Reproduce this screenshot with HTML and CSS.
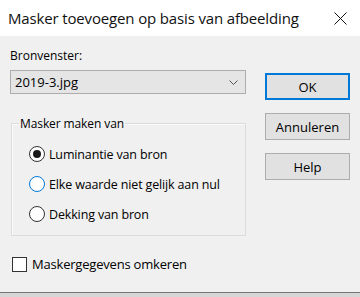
FILE: index.html
```html
<!DOCTYPE html>
<html lang="nl">
<head>
  <meta charset="UTF-8">
  <title>Masker toevoegen op basis van afbeelding</title>
  <link rel="stylesheet" href="styles.css">
</head>
<body>
  <div class="dialog">
    <div class="titlebar">
      <span class="title">Masker toevoegen op basis van afbeelding</span>
      <svg class="close" width="13" height="13" viewBox="0 0 13 13" aria-label="Sluiten">
        <path d="M0.5 0.5 L12.5 12.5 M12.5 0.5 L0.5 12.5" stroke="#111" stroke-width="1" fill="none"/>
      </svg>
    </div>

    <div class="body">
      <div class="main">
        <div class="left">
          <div class="label">Bronvenster:</div>
          <div class="select">
            <span>2019-3.jpg</span>
            <svg width="9" height="5" viewBox="0 0 9 5">
              <path d="M0.5 0.5 L4.5 4.5 L8.5 0.5" stroke="#555" fill="none"/>
            </svg>
          </div>

          <fieldset class="group">
            <legend>Masker maken van</legend>
            <div class="option">
              <span class="radio checked"></span>
              <span>Luminantie van bron</span>
            </div>
            <div class="option">
              <span class="radio focus"></span>
              <span>Elke waarde niet gelijk aan nul</span>
            </div>
            <div class="option">
              <span class="radio"></span>
              <span>Dekking van bron</span>
            </div>
          </fieldset>
        </div>

        <div class="buttons">
          <button class="btn default">OK</button>
          <button class="btn">Annuleren</button>
          <button class="btn">Help</button>
        </div>
      </div>

      <div class="check-row">
        <span class="checkbox"></span>
        <span>Maskergegevens omkeren</span>
      </div>
    </div>
  </div>
</body>
</html>
```

FILE: styles.css
```css
body {
  margin: 0;
  background: #d6d6d6;
  font-family: "Open Sans", "Noto Sans", sans-serif;
  color: #000;
}

.dialog {
  height: 292px;
  background: #f0f0f0;
  border-bottom: 1px solid #777;
}

.titlebar {
  height: 36px;
  background: #fff;
  display: flex;
  align-items: center;
  justify-content: space-between;
  padding: 0 13px 0 8px;
}

.title {
  font-size: 15px;
  letter-spacing: -0.15px;
  color: #111;
}

.body {
  padding: 12px 10px 0 10px;
}

.main {
  display: flex;
}

.left {
  width: 236px;
}

.label {
  font-size: 12px;
  line-height: 16px;
  height: 22px;
}

.select {
  height: 22px;
  border: 1px solid #adadad;
  background: #e5e5e5;
  display: flex;
  align-items: center;
  justify-content: space-between;
  padding: 0 7px 0 4px;
  font-size: 13px;
}

.group {
  margin: 21px 0 0 1px;
  padding: 7px 0 6px 17px;
  border: 1px solid #dcdcdc;
  box-shadow: inset 1px 1px 0 #fafafa;
}

.group legend {
  font-size: 12px;
  letter-spacing: -0.1px;
  padding: 0 1px;
  margin-left: -10px;
}

.option {
  display: flex;
  align-items: center;
  gap: 4px;
  height: 30px;
  font-size: 12.5px;
  letter-spacing: -0.15px;
}

.radio {
  width: 14px;
  height: 14px;
  border: 1px solid #333;
  border-radius: 50%;
  background: #fff;
  position: relative;
}

.radio.checked::after {
  content: "";
  position: absolute;
  left: 3px;
  top: 3px;
  width: 8px;
  height: 8px;
  border-radius: 50%;
  background: #1a1a1a;
}

.radio.focus {
  border-color: #0078d7;
}

.buttons {
  margin: 25px 0 0 19px;
  display: flex;
  flex-direction: column;
  gap: 13px;
}

.btn {
  width: 85px;
  height: 27px;
  border: 1px solid #adadad;
  background: #e1e1e1;
  font-family: inherit;
  font-size: 13px;
  color: #000;
  padding: 0;
}

.btn.default {
  border: 2px solid #0078d7;
}

.check-row {
  margin-top: 19px;
  display: flex;
  align-items: center;
  gap: 5px;
  font-size: 13px;
  letter-spacing: -0.2px;
  padding-left: 2px;
}

.checkbox {
  width: 13px;
  height: 13px;
  border: 1px solid #333;
  background: #fff;
}
```
